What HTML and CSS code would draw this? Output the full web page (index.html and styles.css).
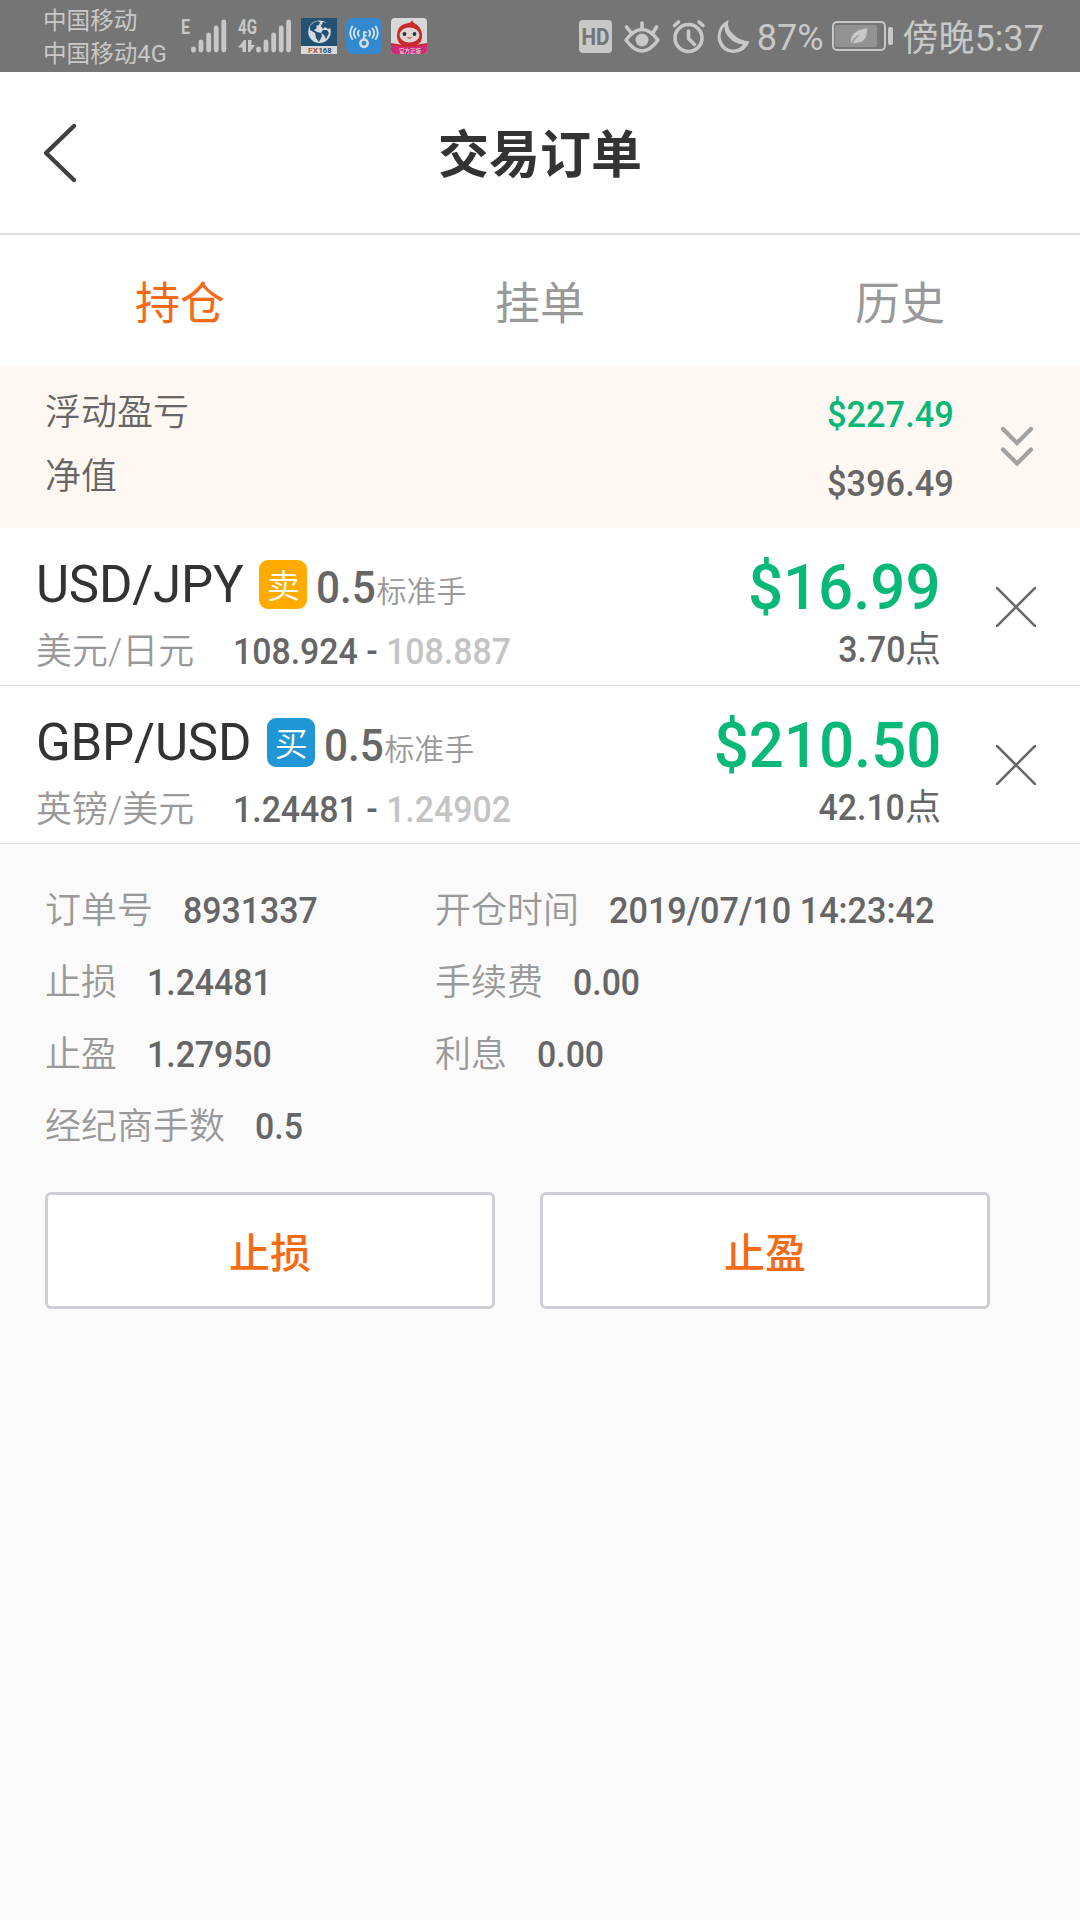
FILE: index.html
```html
<!DOCTYPE html>
<html lang="zh-CN">
<head>
<meta charset="utf-8">
<title>交易订单</title>
<link rel="stylesheet" href="styles.css">
</head>
<body>
<div class="status">
  <div class="carriers"><span>中国移动</span><span>中国移动4G</span></div>
  <svg class="signals" width="112" height="52" viewBox="0 -8 112 52">
    <g fill="#c8c8c8">
      <text class="net" x="0" y="15.500" textLength="9" lengthAdjust="spacingAndGlyphs">E</text>
      <text class="net" x="57" y="15.500" textLength="19" lengthAdjust="spacingAndGlyphs">4G</text>
    </g>
    <g stroke="#c8c8c8" stroke-width="4.800" stroke-linecap="round">
      <path d="M12.500 31v1.200M20 24v8M27.700 17v15M35.200 10v22M42.800 4v28"/>
      <path d="M77.500 31v1.200M85 24v8M92.700 17v15M100.200 10v22M107.600 4v28"/>
    </g>
    <path fill="#c8c8c8" d="M57 29.500l6-7.500h2v12h-3.500v-4.500zM67 22h3.500v5H74l-5 7h-2z"/>
  </svg>
  <svg class="app" width="36" height="36" viewBox="0 0 36 36">
    <path fill="#245272" d="M0 0h36v28H0z"/><path fill="#d6d9dc" d="M0 28h36v8H0z"/>
    <circle cx="18.500" cy="13.800" r="11.300" fill="#d4dadf"/>
    <path fill="#245272" d="M9 8l3-3 4-2 3 1-1 3-3 1 1 2-3 2 3 2 4 1 1 3-3 6-3-4-1-5-5-3zM22 4l5 1 2.500 5-2.500 1-3-2-2 2-2-3zM22 12l4 0 2 3-3 6-2-4-3-2z"/>
    <text x="7" y="34.800" class="fx" fill="#c4552d" textLength="10" lengthAdjust="spacingAndGlyphs">FX</text><text x="17.500" y="34.800" class="fx" fill="#245272" textLength="13" lengthAdjust="spacingAndGlyphs">168</text>
  </svg>
  <svg class="app" width="36" height="36" viewBox="0 0 36 36">
    <rect width="36" height="36" rx="7" fill="#3389d0"/>
    <g fill="none" stroke="#d3dfe8" stroke-width="1.900" stroke-linecap="round">
      <circle cx="18" cy="25.300" r="3.700" stroke-width="2.500"/>
      <path d="M18 21v-7"/><path d="M18.500 14.300h2M18.500 17.600h1.500" stroke-width="1.600"/>
      <path d="M12.800 12.500q-2 2.700 0 5.500M9.500 10.500q-3.300 4.500 0 9.300M6.200 8.500q-4 6.500 0 12.500M23.200 12.500q2 2.700 0 5.500M26.500 10.500q3.300 4.500 0 9.300M29.800 8.500q4 6.500 0 12.500"/>
    </g>
  </svg>
  <svg class="app" width="36" height="36" viewBox="0 0 36 36">
    <rect width="36" height="36" rx="4" fill="#d8d8d8"/>
    <path fill="#c92b2c" d="M21 2q1 3 4 4 7 5 6 14-1 8-13 9Q6 28 6 18 6 6 18 5q3-1 3-3z"/>
    <path fill="#c92b2c" d="M0 25q18 4 36 0v4H0z"/>
    <path fill="#cf2b78" d="M0 27q18 4 36 0v5q0 4-4 4H4q-4 0-4-4z"/>
    <ellipse cx="18.500" cy="17" rx="10" ry="7.500" fill="#dcd5d2"/>
    <circle cx="13.500" cy="16" r="1.900" fill="#333"/><circle cx="23.500" cy="16" r="1.900" fill="#333"/>
    <path d="M16.500 19.500q2 1.500 4 0" fill="none" stroke="#c92b2c"/>
    <text x="8" y="34.800" class="tiny">官方正版</text>
  </svg>
  <div class="right">
    <svg width="172" height="36" viewBox="0 0 172 36">
      <rect x="0" y="2" width="33" height="33" rx="4" fill="#c8c8c8"/>
      <text class="hd" x="2.500" y="26.500" textLength="28" lengthAdjust="spacingAndGlyphs">HD</text>
      <g fill="none" stroke="#c8c8c8" stroke-width="3.600" stroke-linecap="round">
        <path d="M47 22q16-21 32 0-16 22-32 0z" stroke-linejoin="round"/>
        <path d="M63 10V5M51.500 14l-4-5M74.500 14l3-5"/>
        <circle cx="109.500" cy="20" r="13.500"/>
        <path d="M109.500 13v7.500l6 6"/>
        <path d="M95.500 7.500l4-3.500M124 7.500l-4-3.500"/>
      </g>
      <circle cx="63" cy="22" r="6.500" fill="#c8c8c8"/>
      <path fill="#c8c8c8" fill-rule="evenodd" d="M149.500 2q-2 8 4.500 14 7 7 16.500 7.500-4 11-16 11.500-14-1-16-15 0-13 11-18zM145.500 8q-5 6-3.500 13 3 10 12 10.500 6 0 10-5-9-1-14-7-5-5-4.500-11.500z"/>
    </svg>
    <span class="pct">87%</span>
    <svg class="battery" width="62" height="30" viewBox="0 0 62 30">
      <rect x="1" y="1" width="52" height="28" rx="4" fill="none" stroke="#c8c8c8" stroke-width="2"/>
      <rect x="3" y="4" width="42" height="22" rx="1" fill="#929292"/>
      <rect x="56" y="6" width="5" height="18" rx="2" fill="#c8c8c8"/>
      <path fill="#c8c8c8" d="M19 23q-2-13 16-16 1 16-14 15 2-5 8-9-8 3-10 10z"/>
    </svg>
    <span class="time">傍晚5:37</span>
  </div>
</div>

<header class="header">
  <svg class="back" width="36" height="62" viewBox="0 0 36 62"><path d="M32 4L4 31l28 27" fill="none" stroke="#404040" stroke-width="4.400" stroke-linecap="round" stroke-linejoin="round"/></svg>
  <h1>交易订单</h1>
</header>

<nav class="tabs"><a class="on">持仓</a><a>挂单</a><a>历史</a></nav>

<section class="summary">
  <div class="labels"><span>浮动盈亏</span><span>净值</span></div>
  <div class="values"><span class="num green">$227.49</span><span class="num">$396.49</span></div>
  <svg class="more" width="34" height="42" viewBox="0 0 34 42"><path d="M3 3l14 14L31 3M3 23.500l14 14 14-14" fill="none" stroke="#a3a19f" stroke-width="4.200" stroke-linecap="round"/></svg>
</section>

<article class="order">
  <div class="info">
    <div class="line1"><span class="pair">USD/JPY</span><span class="badge sell">卖</span><span class="lots num">0.5</span><span class="unit">标准手</span></div>
    <div class="line2"><span class="name">美元/日元</span><span class="num prices">108.924 - <i>108.887</i></span></div>
  </div>
  <div class="result"><span class="num profit">$16.99</span><div class="points"><span class="num">3.70</span>点</div></div>
  <svg class="close" width="40" height="40" viewBox="0 0 40 40"><path d="M0 0l40 40M40 0L0 40" stroke="#666" stroke-width="2.600"/></svg>
</article>

<article class="order">
  <div class="info">
    <div class="line1"><span class="pair">GBP/USD</span><span class="badge buy">买</span><span class="lots num">0.5</span><span class="unit">标准手</span></div>
    <div class="line2"><span class="name">英镑/美元</span><span class="num prices">1.24481 - <i>1.24902</i></span></div>
  </div>
  <div class="result"><span class="num profit">$210.50</span><div class="points"><span class="num">42.10</span>点</div></div>
  <svg class="close" width="40" height="40" viewBox="0 0 40 40"><path d="M0 0l40 40M40 0L0 40" stroke="#666" stroke-width="2.600"/></svg>
</article>

<section class="details">
  <div class="grid">
    <div>订单号<span class="num">8931337</span></div><div>开仓时间<span class="num datetime">2019/07/10 14:23:42</span></div>
    <div>止损<span class="num">1.24481</span></div><div>手续费<span class="num">0.00</span></div>
    <div>止盈<span class="num">1.27950</span></div><div>利息<span class="num">0.00</span></div>
    <div>经纪商手数<span class="num">0.5</span></div>
  </div>
  <div class="buttons"><button>止损</button><button>止盈</button></div>
</section>
</body>
</html>
```
FILE: styles.css
```css
* { box-sizing: border-box; }
body {
  margin: 0;
  width: 1080px;
  height: 1920px;
  overflow: hidden;
  background: #fafafa;
  font-family: Roboto, "Noto Sans CJK SC", sans-serif;
  font-size: 36px;
  font-weight: 350;
  color: #666;
}
svg { display: block; flex: none; }

.status {
  height: 72px;
  display: flex;
  align-items: center;
  background: #757575;
  color: #c8c8c8;
  padding: 0 36px 0 43px;
}
.carriers {
  width: 138px;
  padding-top: 4px;
  display: flex;
  flex-direction: column;
  font-size: 23.6px;
  line-height: 33px;
  white-space: nowrap;
  font-weight: 400;
}
.net { font: 700 20px Roboto, sans-serif; }
.app { margin-left: 9px; }
.signals { margin-right: -1px; }
.fx { font: 700 8px Roboto, sans-serif; }
.tiny { font: 500 5.500px "Noto Sans CJK SC", sans-serif; fill: #e6d5dc; }
.hd { font: 700 23px Roboto, sans-serif; fill: #757575; }
.right { margin-left: auto; display: flex; align-items: center; font-weight: 400; white-space: nowrap; }
.pct { margin: 3px 8px 0 6px; }
.battery { margin-right: 9px; }
.time { margin: -3px 0 0; }

.header {
  height: 163px;
  display: grid;
  grid-template-columns: 200px 1fr 200px;
  align-items: center;
  background: #fff;
  border-bottom: 2px solid #dedee2;
}
.back { margin: 0 0 0 42px; }
h1 { margin: 7px 0 0; text-align: center; font-size: 51px; line-height: 74px; font-weight: 700; color: #333; }

.tabs {
  height: 132px;
  display: grid;
  grid-template-columns: repeat(3, 1fr);
  background: #fff;
  text-align: center;
  font-size: 45px;
  line-height: 140px;
  font-weight: 400;
  color: #999;
}
.tabs .on { color: #f56a15; }

.summary {
  height: 161px;
  display: flex;
  background: #fff8f2;
  padding: 0 46px 0 45px;
}
.labels, .values { display: flex; flex-direction: column; }
.labels { line-height: 64px; padding-top: 14px; }
.values { margin-left: auto; line-height: 69px; padding-top: 14px; text-align: right; }
.more { margin: 59px 0 0 46px; }

.num {
  display: inline-block;
  font-weight: 500;
  color: #666;
  white-space: nowrap;
  transform: scaleX(0.94);
  transform-origin: left;
}
.values .num, .result .num { transform-origin: right; }
.values .num { transform: scaleX(0.955); }
.green, .result .profit { color: #08b877; }

.order {
  height: 158px;
  display: flex;
  background: #fff;
  border-bottom: 1px solid #e2e2e4;
  padding: 0 44px 0 36px;
}
.line1 { display: flex; height: 90px; padding-top: 23px; }
.pair { font-size: 51px; line-height: 68px; color: #333; font-weight: 400; letter-spacing: -0.2px; }
.badge {
  width: 48px;
  height: 49px;
  margin: 9px 0 0 16px;
  border-radius: 9px;
  color: #fff;
  font-size: 33px;
  line-height: 54px;
  text-align: center;
}
.sell { background: #ffab00; }
.buy { background: #2196d6; }
.lots { width: 60px; margin-left: 9px; font-size: 45px; line-height: 73px; }
.unit { font-size: 30px; line-height: 82px; color: #999; }
.line2 { display: flex; line-height: 68px; }
.name { width: 197px; color: #999; }
.prices i { font-style: normal; color: #c4c4c4; }
.result { margin-left: auto; text-align: right; }
.result .profit { display: block; height: 90px; font-size: 63px; line-height: 120px; transform: scaleX(0.98); }
.points { line-height: 65px; font-weight: 400; }
.close { margin: 59px 0 0 55px; }

.details { padding: 31px 45px 0; }
.grid {
  display: grid;
  grid-template-columns: 390px 1fr;
  grid-auto-rows: 72px;
  line-height: 72px;
  color: #999;
}
.grid .num { margin-left: 30px; }
.grid .datetime { transform: scaleX(0.95); }
.buttons { display: flex; gap: 45px; margin-top: 29px; }
button {
  width: 450px;
  height: 117px;
  padding: 0 0 2px;
  border: 3px solid #cecfd5;
  border-radius: 6px;
  background: #fff;
  color: #f56a15;
  font: 500 41px "Noto Sans CJK SC", sans-serif;
}
```
